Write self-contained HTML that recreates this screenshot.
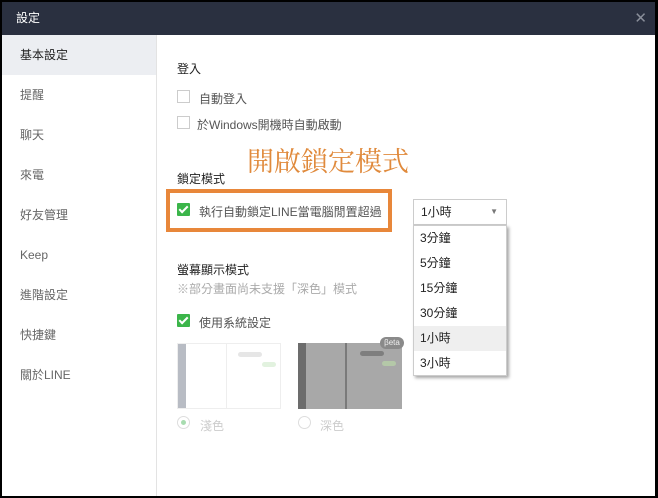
<!DOCTYPE html>
<html><head><meta charset="utf-8"><style>
*{margin:0;padding:0;box-sizing:border-box}
body{width:658px;height:498px;background:#000;position:relative;overflow:hidden;font-family:"Liberation Sans","Noto Sans CJK TC",sans-serif;font-size:12px;color:#333}
.win{position:absolute;left:2px;top:2px;width:653px;height:494px;background:#fff}
.title{position:absolute;left:0;top:0;width:653px;height:33px;background:#2a3040;color:#fff;font-size:12px;line-height:33px;padding-left:14px}
.x{position:absolute;right:8px;top:0;color:#8a8f9a;font-size:15px}
.side{position:absolute;left:0;top:33px;width:155px;height:461px;border-right:1px solid #e3e3e3}
.side div{height:40px;line-height:40px;padding-left:18px;color:#666}
.side .on{background:#eceef2;color:#222}
.a{position:absolute;white-space:nowrap}
.cb{position:absolute;width:13px;height:13px;border:1px solid #ccc;background:#fff}
.ck{position:absolute;width:13px;height:13px;background:#3bb54a;border-radius:1px}
.ck:after{content:"";position:absolute;left:4px;top:1px;width:3px;height:7px;border:solid #fff;border-width:0 2px 2px 0;transform:rotate(45deg)}
.dd div{height:25px;line-height:25px;padding-left:6px;color:#222}
</style></head><body>
<div class="win">
<div class="title">設定<span class="x">✕</span></div>
<div class="side">
<div class="on">基本設定</div><div>提醒</div><div>聊天</div><div>來電</div><div>好友管理</div><div>Keep</div><div>進階設定</div><div>快捷鍵</div><div>關於LINE</div>
</div>
<div class="a" style="left:175px;top:58px;color:#222">登入</div>
<div class="cb" style="left:175px;top:88px"></div>
<div class="a" style="left:197px;top:88px;color:#555">自動登入</div>
<div class="cb" style="left:175px;top:114px"></div>
<div class="a" style="left:195px;top:114px;color:#555">於Windows開機時自動啟動</div>
<div class="a" style="left:245px;top:142px;font-size:27px;color:#e08a3c;font-family:'Noto Serif CJK SC',serif;line-height:32px">開啟鎖定模式</div>
<div class="a" style="left:175px;top:168px;color:#222">鎖定模式</div>
<div class="a" style="left:164px;top:187px;width:226px;height:43px;border:4px solid #e8873a"></div>
<div class="ck" style="left:175px;top:201px"></div>
<div class="a" style="left:197px;top:201px;color:#555">執行自動鎖定LINE當電腦閒置超過</div>
<div class="a" style="left:411px;top:197px;width:94px;height:26px;border:1px solid #ccc;line-height:24px;padding-left:7px;color:#222">1小時<span style="position:absolute;right:8px;top:0;font-size:8px;color:#777">▼</span></div>
<div class="a dd" style="left:411px;top:223px;width:94px;height:151px;border:1px solid #ccc;background:#fff;box-shadow:2px 2px 3px rgba(0,0,0,.35)">
<div>3分鐘</div><div>5分鐘</div><div>15分鐘</div><div>30分鐘</div><div style="background:#efefef">1小時</div><div>3小時</div></div>
<div class="a" style="left:175px;top:259px;color:#222">螢幕顯示模式</div>
<div class="a" style="left:175px;top:278px;color:#aaa">※部分畫面尚未支援「深色」模式</div>
<div class="ck" style="left:175px;top:312px"></div>
<div class="a" style="left:197px;top:312px;color:#555">使用系統設定</div>
<div class="a" style="left:175px;top:341px;width:104px;height:66px;border:1px solid #eee;background:#fff">
<div style="position:absolute;left:0;top:0;width:8px;height:64px;background:#b8bcc4"></div>
<div style="position:absolute;left:48px;top:0;width:1px;height:64px;background:#eee"></div>
<div style="position:absolute;left:60px;top:8px;width:24px;height:5px;border-radius:3px;background:#e6e6e6"></div>
<div style="position:absolute;left:84px;top:18px;width:14px;height:5px;border-radius:3px;background:#e2f2df"></div>
</div>
<div class="a" style="left:296px;top:341px;width:104px;height:66px;background:#a8a8a8">
<div style="position:absolute;left:0;top:0;width:8px;height:66px;background:#6c6c6c"></div>
<div style="position:absolute;left:47px;top:0;width:2px;height:66px;background:#7a7a7a"></div>
<div style="position:absolute;left:62px;top:8px;width:24px;height:5px;border-radius:3px;background:#7e7e7e"></div>
<div style="position:absolute;left:84px;top:18px;width:14px;height:5px;border-radius:3px;background:#b4c8a8"></div>
<div style="position:absolute;right:-2px;top:-6px;width:24px;height:12px;border-radius:6px;background:#8a8a8a;color:#eee;font-size:8px;line-height:12px;text-align:center">βeta</div>
</div>
<div class="a" style="left:175px;top:414px;width:13px;height:13px;border:1px solid #ddd;border-radius:50%"><div style="position:absolute;left:3px;top:3px;width:5px;height:5px;border-radius:50%;background:#a8dcb0"></div></div>
<div class="a" style="left:198px;top:415px;color:#ccc">淺色</div>
<div class="a" style="left:296px;top:414px;width:13px;height:13px;border:1px solid #ddd;border-radius:50%"></div>
<div class="a" style="left:318px;top:415px;color:#ccc">深色</div>
</div>
</body></html>
